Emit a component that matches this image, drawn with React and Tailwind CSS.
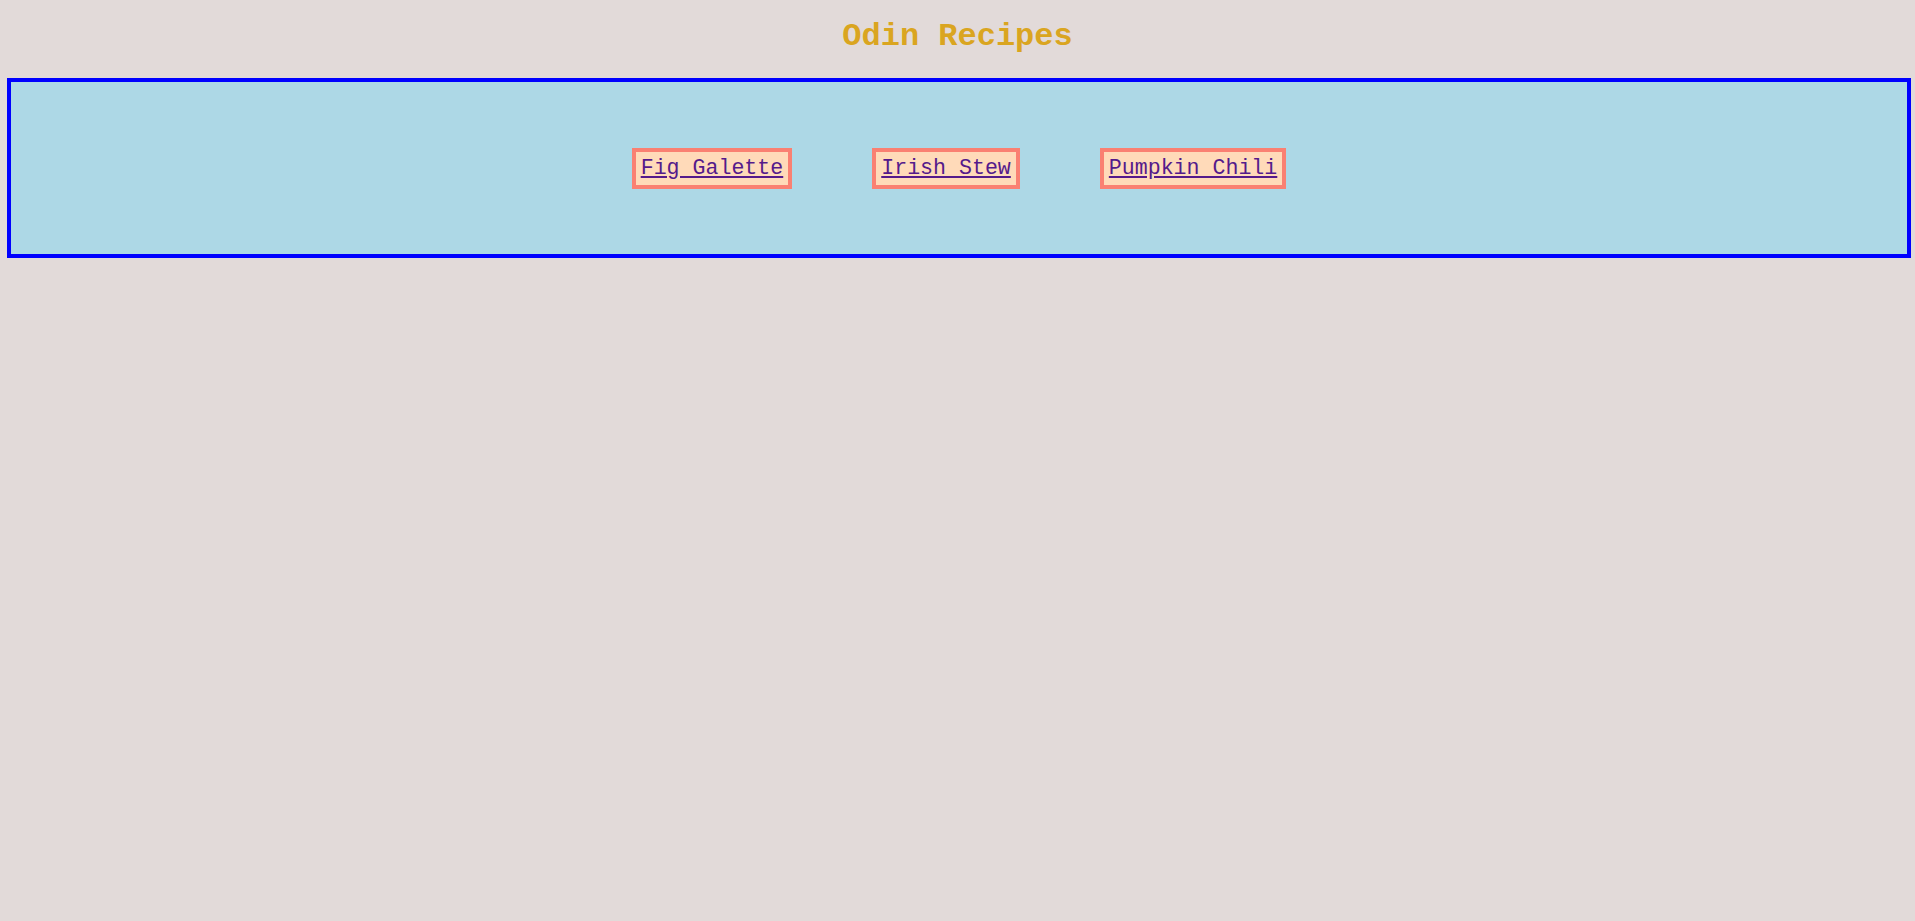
const recipes = ["Fig Galette", "Irish Stew", "Pumpkin Chili"];

export default function App() {
  return (
    <main className="min-h-[921px] bg-[#e2dad9] font-['Liberation_Mono','Courier_New',monospace]">
      <header className="h-[78px] pt-[19px]">
        <h1 className="text-center text-[32px] leading-[36px] font-bold text-[#daa520]">
          Odin Recipes
        </h1>
      </header>
      <nav className="ml-[7px] flex h-[180px] w-[1904px] items-center justify-center gap-[80px] border-4 border-[#0000ff] bg-[#add8e6]">
        {recipes.map((name) => (
          <a
            key={name}
            href="#"
            className="border-4 border-[#fa8072] bg-[#ffdab9] px-[5px] py-[4px] text-[21.6px] leading-[25px] text-[#551a8b] underline"
          >
            {name}
          </a>
        ))}
      </nav>
    </main>
  );
}
